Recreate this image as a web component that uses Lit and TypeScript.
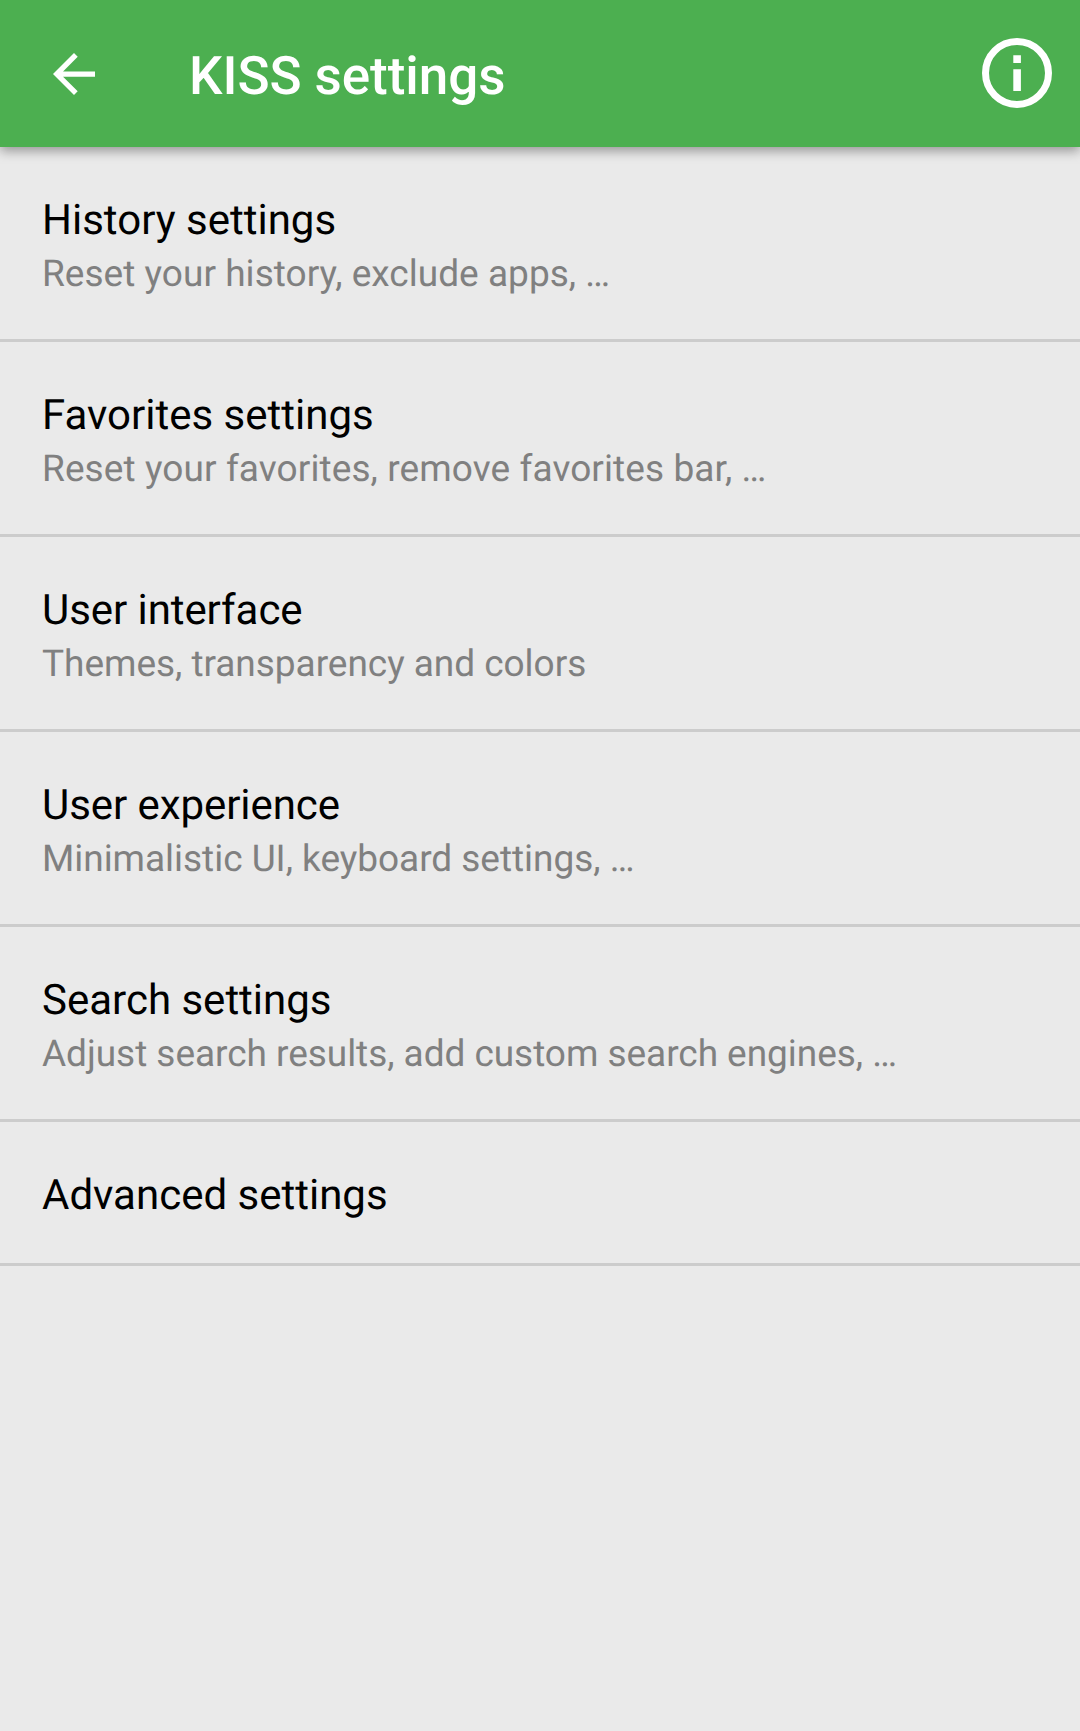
import { LitElement, html, css, nothing } from "lit";
import { customElement } from "lit/decorators.js";
import { styleMap } from "lit/directives/style-map.js";

interface Item {
  title: string;
  summary: string;
  titleTracking: number;
  summaryTracking: number;
}

const items: Item[] = [
  { title: "History settings", summary: "Reset your history, exclude apps, …", titleTracking: 0, summaryTracking: 0.03 },
  { title: "Favorites settings", summary: "Reset your favorites, remove favorites bar, …", titleTracking: 0, summaryTracking: 0.095 },
  { title: "User interface", summary: "Themes, transparency and colors", titleTracking: -0.07, summaryTracking: -0.035 },
  { title: "User experience", summary: "Minimalistic UI, keyboard settings, …", titleTracking: -0.07, summaryTracking: -0.03 },
  { title: "Search settings", summary: "Adjust search results, add custom search engines, …", titleTracking: 0, summaryTracking: -0.043 },
  { title: "Advanced settings", summary: "", titleTracking: 0, summaryTracking: 0 },
];

const tracking = (px: number) => styleMap({ letterSpacing: `${px}px` });

@customElement("app-root")
export class AppRoot extends LitElement {
  static styles = css`
    :host {
      display: block;
      min-height: 1731px;
      background: #eaeaea;
      font-family: Roboto, sans-serif;
      text-rendering: geometricPrecision;
    }
    .bar {
      box-sizing: border-box;
      height: 147px;
      display: flex;
      align-items: center;
      padding: 0 28px 0 52.5px;
      background: #4caf50;
      color: #fff;
      box-shadow: 0 4px 11px rgba(0, 0, 0, 0.36);
    }
    .back { width: 42px; height: 42px; display: block; }
    .info { width: 70px; height: 70px; display: block; margin-bottom: 1px; }
    h1 {
      flex: 1;
      margin: 4px 0 0 94.5px;
      font-size: 53px;
      line-height: 62px;
      font-weight: 500;
      letter-spacing: -0.06px;
    }
    ul { list-style: none; margin: 0; padding: 0; }
    .row {
      box-sizing: border-box;
      padding: 48px 42px 41px;
      border-bottom: 3px solid #cccccc;
    }
    .title { font-size: 42px; line-height: 52px; color: #000; }
    .summary { margin-top: 4px; font-size: 37px; line-height: 47px; color: #808080; }
  `;

  render() {
    return html`
      <header class="bar">
        <svg class="back" viewBox="4 4 16 16" fill="currentColor">
          <path d="M20 11H7.83l5.59-5.59L12 4l-8 8 8 8 1.41-1.41L7.83 13H20v-2z" />
        </svg>
        <h1>KISS settings</h1>
        <svg class="info" viewBox="0 0 70 70">
          <circle cx="35" cy="35" r="31.5" fill="none" stroke="currentColor" stroke-width="7" />
          <path fill="currentColor" d="M31.3 17.3h7.6v7.6h-7.6zM31.3 31.3h7.6v21.7h-7.6z" />
        </svg>
      </header>
      <ul>
        ${items.map(
          (i) => html`<li class="row">
            <div class="title" style=${tracking(i.titleTracking)}>${i.title}</div>
            ${i.summary
              ? html`<div class="summary" style=${tracking(i.summaryTracking)}>${i.summary}</div>`
              : nothing}
          </li>`
        )}
      </ul>
    `;
  }
}
